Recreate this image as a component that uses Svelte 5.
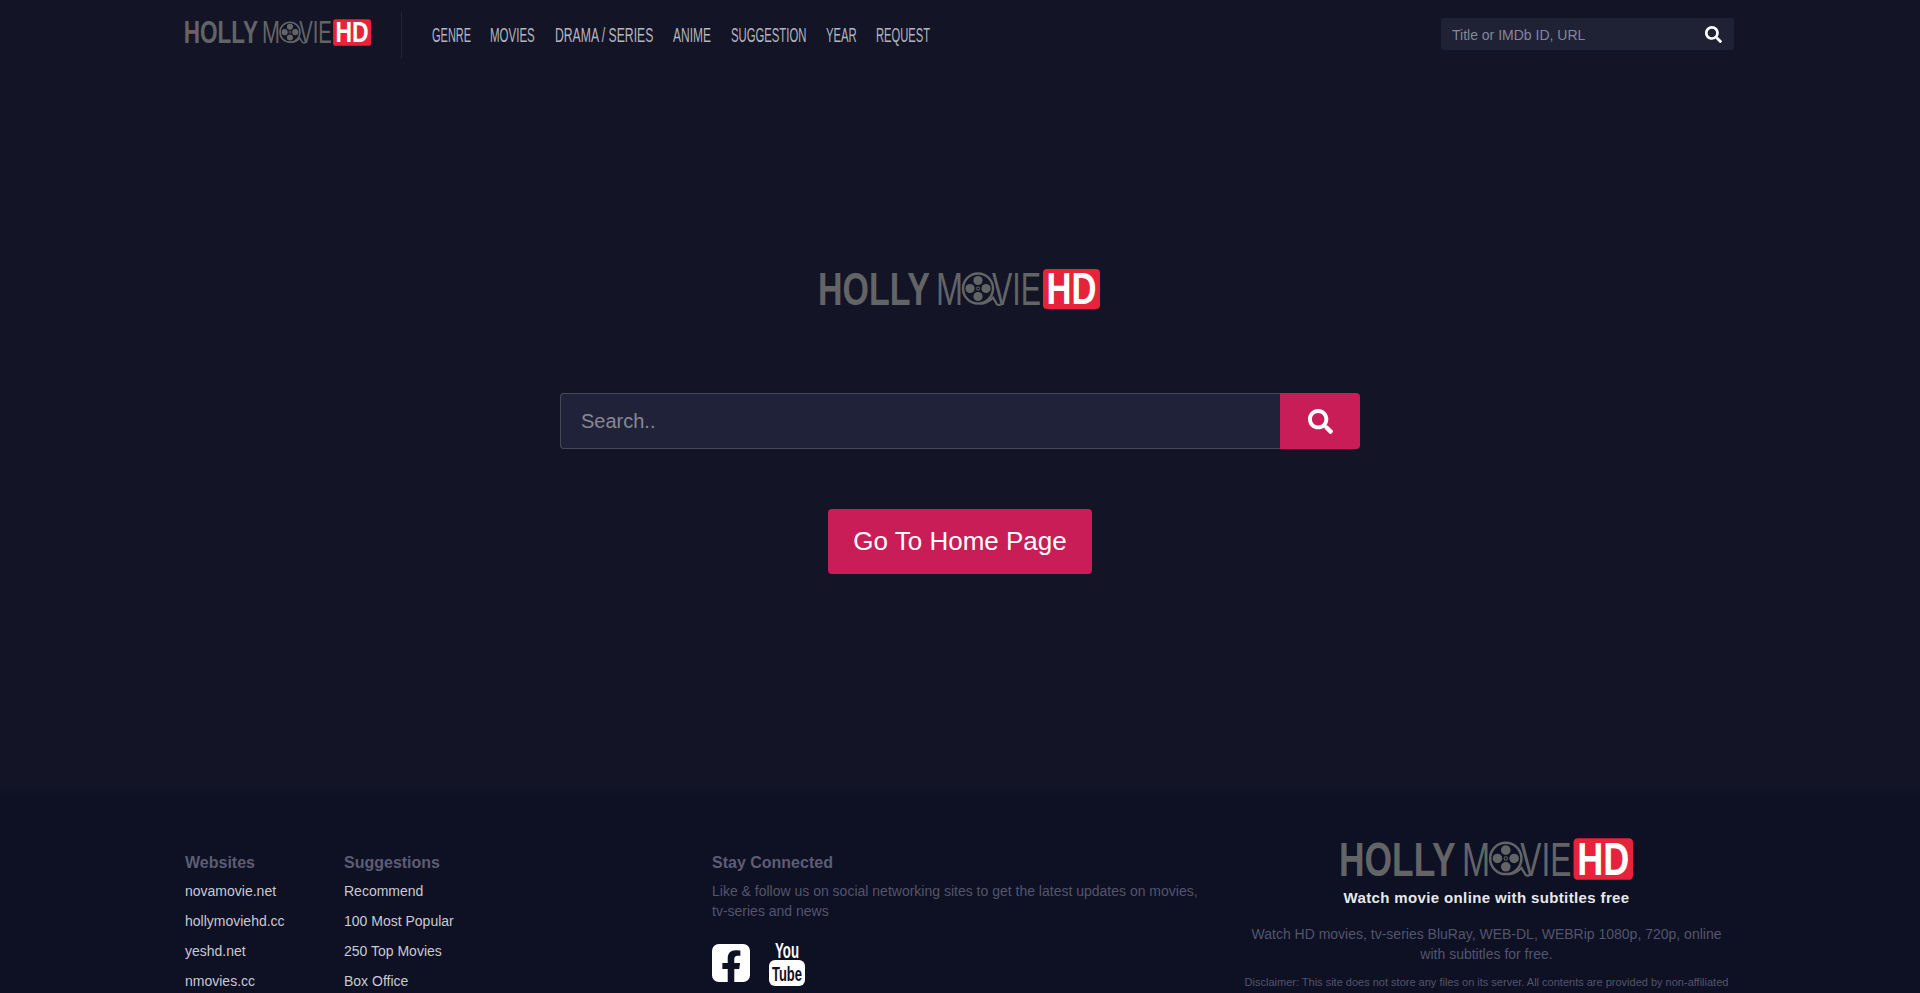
<script>
  const navItems = [
    { label: "GENRE", w: 38, sx: 0.55 },
    { label: "MOVIES", w: 45, sx: 0.575 },
    { label: "DRAMA / SERIES", w: 98, sx: 0.61 },
    { label: "ANIME", w: 38, sx: 0.6 },
    { label: "SUGGESTION", w: 75, sx: 0.565 },
    { label: "YEAR", w: 30, sx: 0.565 },
    { label: "REQUEST", w: 53, sx: 0.56 },
  ];
  const websites = ["novamovie.net", "hollymoviehd.cc", "yeshd.net", "nmovies.cc"];
  const suggestions = ["Recommend", "100 Most Popular", "250 Top Movies", "Box Office"];
  const searchPath =
    "M505 442.7L405.3 343c-4.5-4.5-10.6-7-17-7H372c27.6-35.3 44-79.7 44-128C416 93.1 322.9 0 208 0S0 93.1 0 208s93.1 208 208 208c48.3 0 92.7-16.4 128-44v16.3c0 6.4 2.5 12.5 7 17l99.7 99.7c9.4 9.4 24.6 9.4 33.9 0l28.3-28.3c9.4-9.4 9.4-24.6.1-34zM208 336c-70.7 0-128-57.2-128-128 0-70.7 57.2-128 128-128 70.7 0 128 57.2 128 128 0 70.7-57.2 128-128 128z";
</script>

{#snippet logo(cls)}
  <svg class={cls} viewBox="0 0 280 40" role="img" aria-label="HollyMovieHD">
    <g fill="#636466" font-family="'Liberation Sans', Arial, sans-serif">
      <text x="-2" y="36" font-size="46" font-weight="700" textLength="112" lengthAdjust="spacingAndGlyphs">HOLLY</text>
      <text x="116" y="36" font-size="46" textLength="27" lengthAdjust="spacingAndGlyphs">M</text>
      <text x="172" y="36" font-size="46" textLength="49" lengthAdjust="spacingAndGlyphs">VIE</text>
    </g>
    <circle cx="158" cy="19.5" r="15" fill="none" stroke="#636466" stroke-width="2.4" />
    <g fill="#636466">
      <circle cx="158" cy="11.5" r="4.6" />
      <circle cx="158" cy="27.5" r="4.6" />
      <circle cx="150" cy="19.5" r="4.6" />
      <circle cx="166" cy="19.5" r="4.6" />
    </g>
    <circle cx="158" cy="19.5" r="1.6" fill="none" stroke="#636466" />
    <path d="M160 34.6c7 0 11-4 13-6l4 6.6c1.4 1.4 4 .8 5-1" fill="none" stroke="#636466" stroke-width="2.2" />
    <rect x="223" y="0" width="57" height="40" rx="4" fill="#e6233a" />
    <text x="226.5" y="35" fill="#fff" font-family="'Liberation Sans', Arial, sans-serif" font-size="44" font-weight="700" textLength="50" lengthAdjust="spacingAndGlyphs">HD</text>
  </svg>
{/snippet}

<div class="page">
  <header class="header">
    <a class="header__logo" href="#home">{@render logo("logo logo--small")}</a>
    <nav class="nav">
      {#each navItems as item}
        <a href="#nav" style="width:{item.w}px"><span style="transform:scaleX({item.sx})">{item.label}</span></a>
      {/each}
    </nav>
    <form class="header__search">
      <input type="text" placeholder="Title or IMDb ID, URL" />
      <svg viewBox="0 0 512 512" width="17" height="17"><path fill="#fff" d={searchPath} /></svg>
    </form>
  </header>

  <main class="main">
    {@render logo("logo logo--main")}
    <form class="search">
      <input type="text" placeholder="Search.." />
      <button type="button" aria-label="Search">
        <svg viewBox="0 0 512 512" width="25" height="25"><path fill="#fff" d={searchPath} /></svg>
      </button>
    </form>
    <a class="home" href="#home">Go To Home Page</a>
  </main>

  <footer class="footer">
    <div class="col col--sites">
      <h4>Websites</h4>
      <ul>
        {#each websites as site}
          <li><a href="#site">{site}</a></li>
        {/each}
      </ul>
    </div>
    <div class="col col--suggest">
      <h4>Suggestions</h4>
      <ul>
        {#each suggestions as s}
          <li><a href="#suggest">{s}</a></li>
        {/each}
      </ul>
    </div>
    <div class="col col--social">
      <h4>Stay Connected</h4>
      <p>Like &amp; follow us on social networking sites to get the latest updates on movies, tv-series and news</p>
      <div class="social">
        <svg class="fb" viewBox="0 32 448 448" aria-label="Facebook">
          <path fill="#fff" d="M368 32H80A80 80 0 0 0 0 112v288a80 80 0 0 0 80 80h105.25V327.69h-63V256h63v-54.64c0-62.15 37-96.48 93.67-96.48 27.14 0 55.52 4.84 55.52 4.84v61h-31.27c-30.81 0-40.42 19.12-40.42 38.73V256h68.78l-11 71.69h-57.78V480H368a80 80 0 0 0 80-80V112a80 80 0 0 0-80-80z" />
        </svg>
        <svg class="yt" viewBox="0 0 36 44" aria-label="YouTube">
          <text x="18" y="16" text-anchor="middle" fill="#fff" font-family="'Liberation Sans', Arial, sans-serif" font-size="22" font-weight="700" textLength="24" lengthAdjust="spacingAndGlyphs">You</text>
          <rect x="0" y="18" width="36" height="26" rx="6" fill="#fff" />
          <text x="18" y="39" text-anchor="middle" fill="#0e1024" font-family="'Liberation Sans', Arial, sans-serif" font-size="21" font-weight="700" textLength="30" lengthAdjust="spacingAndGlyphs">Tube</text>
        </svg>
      </div>
    </div>
    <div class="col col--about">
      {@render logo("logo logo--footer")}
      <div class="tagline">Watch movie online with subtitles free</div>
      <p class="about">Watch HD movies, tv-series BluRay, WEB-DL, WEBRip 1080p, 720p, online with subtitles for free.</p>
      <p class="disclaimer">Disclaimer: This site does not store any files on its server. All contents are provided by non-affiliated third parties.</p>
    </div>
  </footer>
</div>

<style>
  :global(body) {
    margin: 0;
    background: #131426;
    font-family: "Liberation Sans", Arial, sans-serif;
  }

  .page {
    height: 100vh;
    overflow: hidden;
  }

  a {
    text-decoration: none;
    color: inherit;
  }

  .logo {
    display: block;
    overflow: visible;
  }
  .logo--small {
    width: 186px;
    height: 27px;
  }
  .logo--main {
    width: 280px;
    height: 40px;
  }
  .logo--footer {
    width: 292px;
    height: 42px;
  }

  .header {
    display: flex;
    align-items: center;
    height: 70px;
    padding: 0 186px 0 185px;
    box-sizing: border-box;
  }
  .header__logo {
    padding-right: 30px;
    margin-top: -6px;
  }
  .nav {
    display: flex;
    align-items: center;
    gap: 20px;
    height: 46px;
    padding-left: 30px;
    border-left: 1px solid #24263a;
    font-size: 20px;
    color: #b4b5be;
  }
  /* condensed caps: no narrow family is installed, so the label is squeezed */
  .nav a {
    display: block;
    white-space: nowrap;
  }
  .nav span {
    display: inline-block;
    transform-origin: left center;
  }
  .header__search {
    display: flex;
    align-items: center;
    margin-left: auto;
    width: 293px;
    height: 32px;
    margin-top: -2px;
    padding: 0 12px 0 11px;
    box-sizing: border-box;
    border-radius: 3px;
    background: #1f2135;
  }
  .header__search input {
    flex: 1;
    min-width: 0;
    border: 0;
    padding: 1px 0 0;
    outline: 0;
    background: none;
    font: 14px "Liberation Sans", Arial, sans-serif;
    color: #fff;
  }
  .header__search input::placeholder {
    color: #85869a;
    opacity: 1;
  }

  .main {
    display: flex;
    flex-direction: column;
    align-items: center;
    height: 715px;
    padding-top: 199px;
    box-sizing: border-box;
  }
  .search {
    display: flex;
    width: 800px;
    height: 56px;
    margin-top: 84px;
  }
  .search input {
    flex: 1;
    min-width: 0;
    box-sizing: border-box;
    padding: 0 20px;
    border: 1px solid #46485a;
    border-right: 0;
    border-radius: 4px 0 0 4px;
    outline: 0;
    background: #20223a;
    font: 20px "Liberation Sans", Arial, sans-serif;
    color: #fff;
  }
  .search input::placeholder {
    color: #878893;
    opacity: 1;
  }
  .search button {
    display: flex;
    align-items: center;
    justify-content: center;
    width: 80px;
    padding: 0;
    border: 0;
    border-radius: 0 4px 4px 0;
    background: #c81d56;
  }
  .home {
    display: block;
    margin-top: 60px;
    padding: 16px 25px;
    line-height: 33px;
    font-size: 26px;
    color: #fff;
    background: #c81d56;
    border-radius: 4px;
  }

  .footer {
    display: flex;
    padding: 67px 188px 0 185px;
    background: linear-gradient(#121326, #0e1024 14px);
    height: 400px;
    box-sizing: border-box;
  }
  .col h4 {
    margin: 0;
    font-size: 16px;
    line-height: 22px;
    font-weight: 700;
    color: #5c5d73;
  }
  .col ul {
    list-style: none;
    margin: 2px 0 0;
    padding: 0;
    font-size: 14px;
    color: #c9cad2;
  }
  .col li {
    height: 30px;
    line-height: 30px;
  }
  .col--sites {
    width: 159px;
  }
  .col--suggest {
    width: 368px;
  }
  .col--social {
    width: 529px;
  }
  .col--social p {
    width: 495px;
    margin: 7px 0 0;
    font-size: 14px;
    line-height: 20px;
    color: #54556b;
  }
  .social {
    display: flex;
    align-items: flex-start;
    gap: 19px;
    margin-top: 21px;
  }
  .fb {
    width: 38px;
    height: 38px;
    margin-top: 2px;
  }
  .yt {
    width: 36px;
    height: 44px;
  }
  .col--about {
    flex: 1;
    display: flex;
    flex-direction: column;
    align-items: center;
    margin-top: -14px;
    text-align: center;
  }
  .tagline {
    margin-top: 8px;
    font-size: 15px;
    line-height: 20px;
    font-weight: 700;
    letter-spacing: 0.37px;
    color: #e8e8ea;
  }
  .about {
    margin: 16px 0 0;
    font-size: 14px;
    line-height: 20px;
    color: #54556b;
  }
  .disclaimer {
    margin: 10px 0 0;
    font-size: 11px;
    line-height: 16px;
    color: #54556b;
  }
</style>
